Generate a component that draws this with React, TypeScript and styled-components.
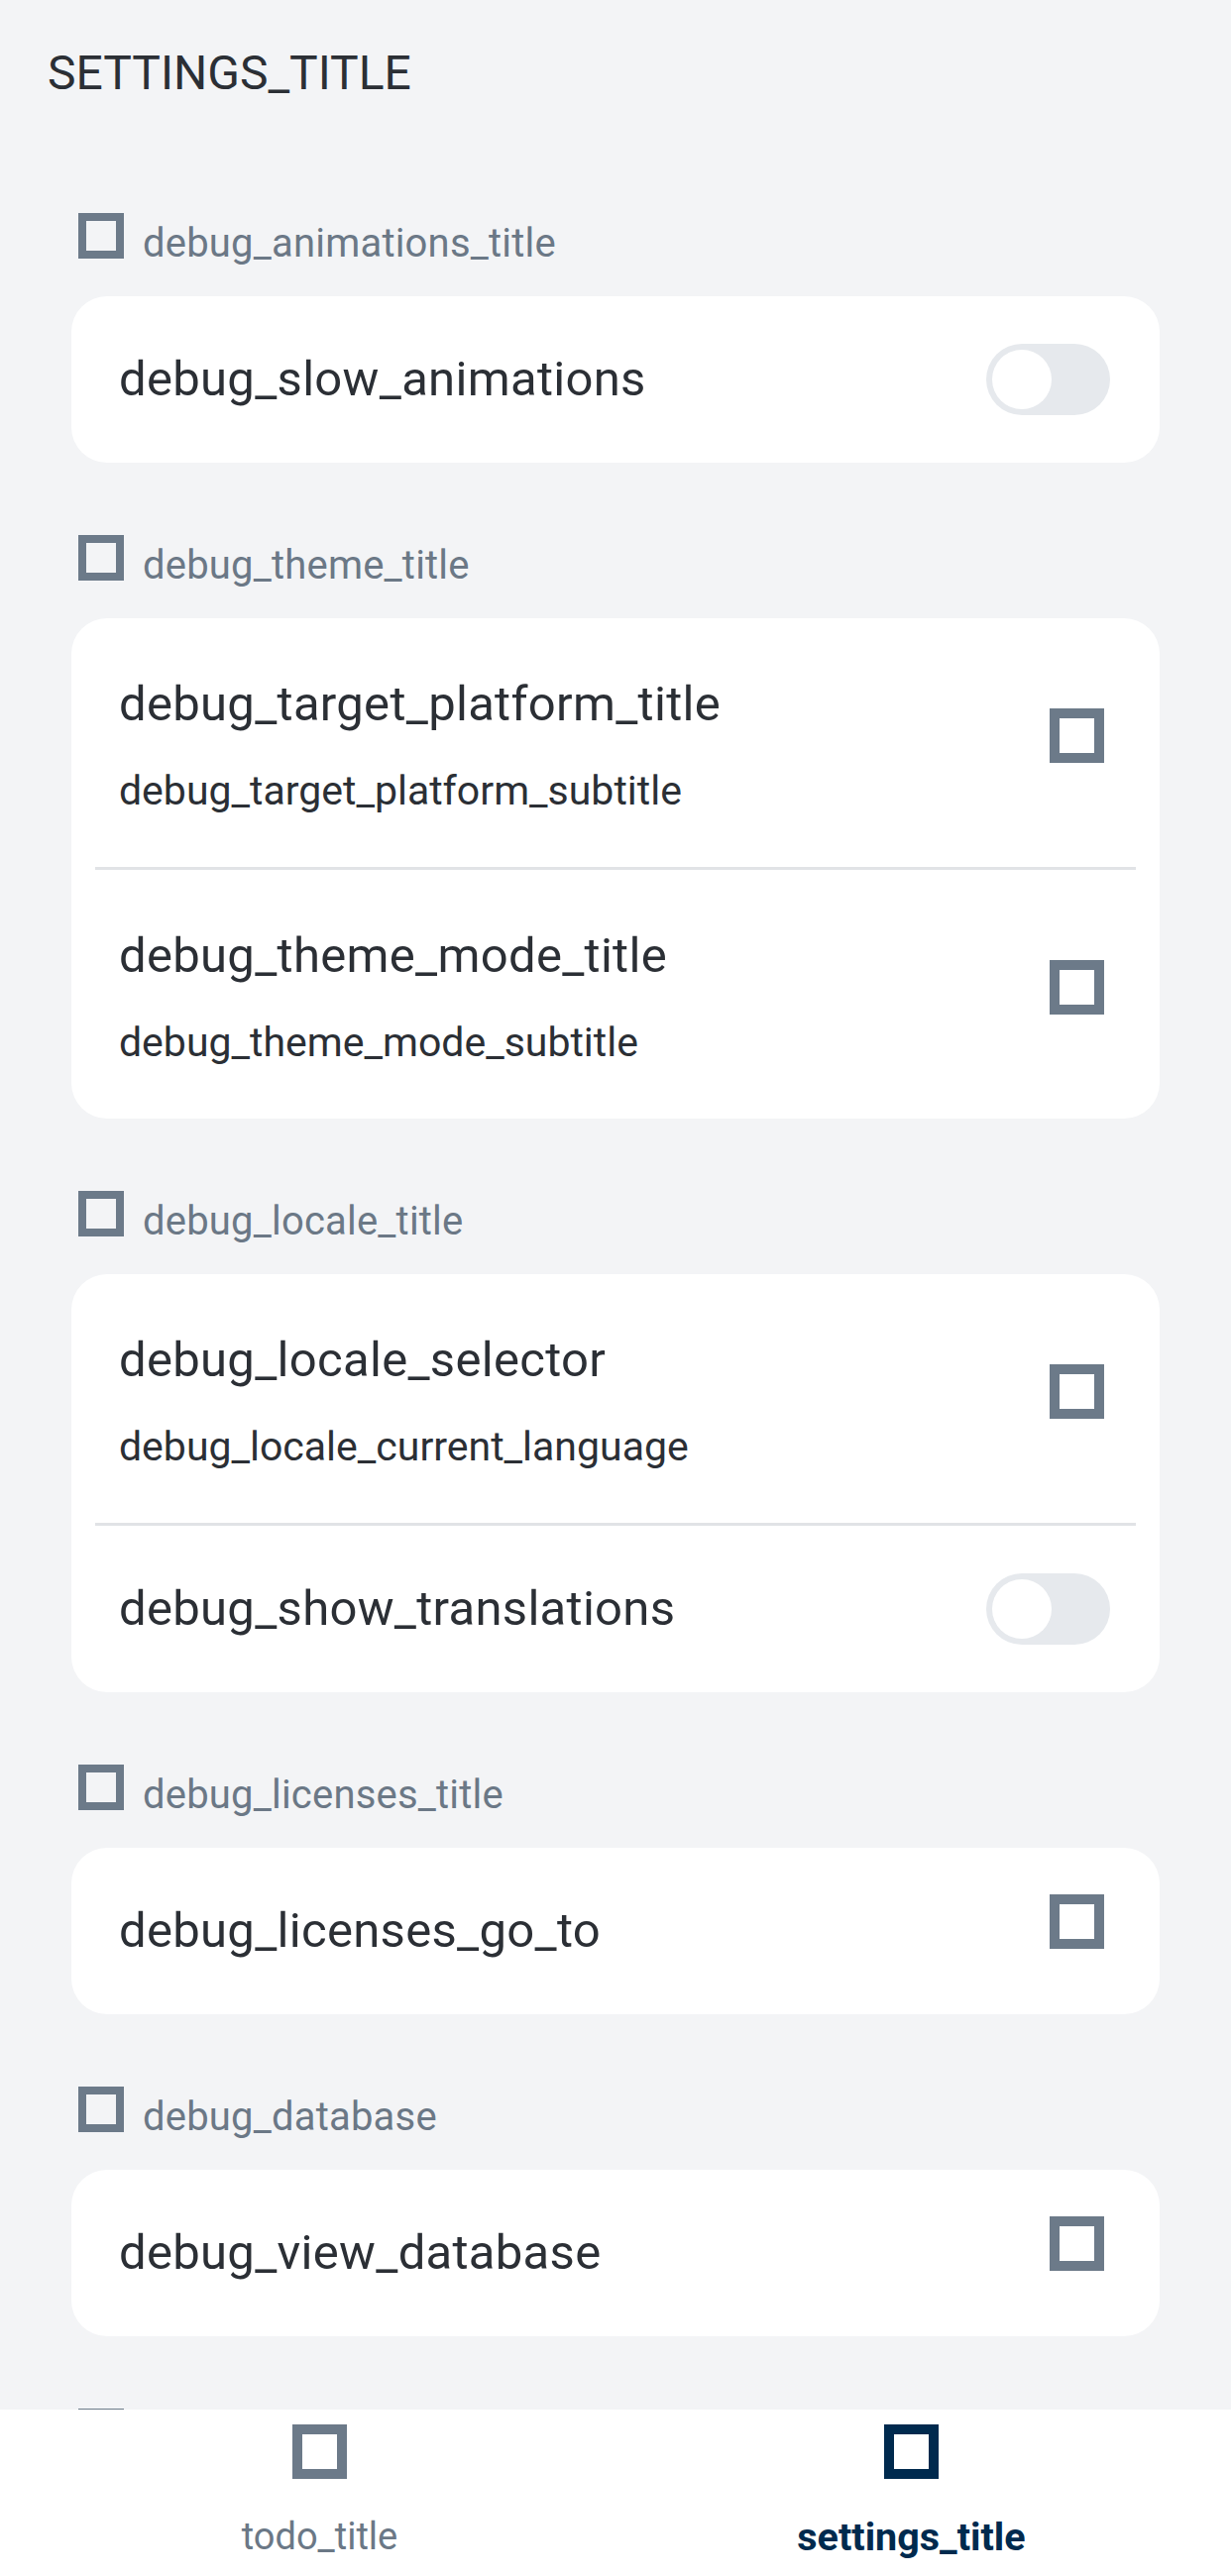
import React from 'react';
import styled, { createGlobalStyle } from 'styled-components';

const GlobalStyle = createGlobalStyle`
  html, body {
    margin: 0;
    padding: 0;
    background: #F3F4F6;
  }
  body {
    font-family: Roboto, "Liberation Sans", Arial, sans-serif;
  }
  * { box-sizing: border-box; }
`;

const Screen = styled.div`
  width: 1242px;
  height: 2600px;
  display: flex;
  flex-direction: column;
  overflow: hidden;
  background: #F3F4F6;
`;

const Content = styled.main`
  flex: 1;
  min-height: 0;
  overflow: hidden;
  padding-top: 46px;
  display: flex;
  flex-direction: column;
`;

const PageTitle = styled.h1`
  margin: 0 0 113px 0;
  padding: 0 48px;
  font-size: 48px;
  line-height: 56px;
  font-weight: 400;
  color: #2B2F35;
`;

const SectionList = styled.div`
  display: flex;
  flex-direction: column;
  gap: 73px;
  padding: 0 72px;
`;

const Section = styled.section`
  display: flex;
  flex-direction: column;
  gap: 24px;
`;

const SectionHeader = styled.div`
  display: flex;
  align-items: center;
  height: 60px;
  padding-left: 7px;
  gap: 19px;
`;

const HeaderLabel = styled.span`
  font-size: 40px;
  line-height: 47px;
  letter-spacing: 0.2px;
  color: #6B7886;
`;

const Card = styled.div`
  background: #FFFFFF;
  border-radius: 36px;
  overflow: hidden;
  display: flex;
  flex-direction: column;
`;

const Row = styled.div<{ $twoLine?: boolean }>`
  display: flex;
  align-items: center;
  justify-content: space-between;
  padding: ${(p) => (p.$twoLine ? '58px 48px 53px 48px' : '0 48px')};
  min-height: ${(p) => (p.$twoLine ? '251px' : '168px')};
`;

const TextBlock = styled.div`
  display: flex;
  flex-direction: column;
`;

const RowTitle = styled.span`
  font-size: 49px;
  line-height: 56px;
  letter-spacing: 0.3px;
  color: #2B2F35;
`;

const RowSubtitle = styled.span`
  margin-top: 36px;
  font-size: 41px;
  line-height: 47px;
  color: #2B2F35;
`;

const Divider = styled.div`
  height: 3px;
  margin: 0 24px;
  background: #E1E3E6;
`;

const Track = styled.div`
  width: 125px;
  height: 72px;
  border-radius: 36px;
  background: #E6E9ED;
  padding: 6px;
  margin-right: 2px;
  display: flex;
  align-items: center;
`;

const Thumb = styled.div`
  width: 60px;
  height: 60px;
  border-radius: 50%;
  background: #FFFFFF;
`;

const Glyph = styled.svg<{ $shift: number }>`
  display: block;
  flex-shrink: 0;
  margin-bottom: ${(p) => p.$shift}px;
`;

const TrailingGlyph = styled(Glyph)`
  margin-right: 8px;
`;

const NavBar = styled.nav`
  height: 168px;
  flex-shrink: 0;
  background: #FFFFFF;
  display: grid;
  grid-template-columns: 1fr 1fr;
  padding: 0 24px;
`;

const NavItem = styled.div`
  display: flex;
  flex-direction: column;
  align-items: center;
  padding-top: 15px;
  gap: 36px;
`;

const NavLabel = styled.span<{ $active?: boolean }>`
  font-size: ${(p) => (p.$active ? '39.5px' : '38px')};
  line-height: 45px;
  font-weight: ${(p) => (p.$active ? 700 : 400)};
  color: ${(p) => (p.$active ? '#002A4E' : '#6B7886')};
`;

const SLATE = '#6C7A89';

function SquareIcon({ size, stroke, color, shift = 0, trailing = false }: { size: number; stroke: number; color: string; shift?: number; trailing?: boolean }) {
  const C = trailing ? TrailingGlyph : Glyph;
  return (
    <C $shift={shift} width={size} height={size} viewBox={`0 0 ${size} ${size}`}>
      <rect x={stroke / 2} y={stroke / 2} width={size - stroke} height={size - stroke} fill="none" stroke={color} strokeWidth={stroke} />
    </C>
  );
}

function Toggle() {
  return (
    <Track>
      <Thumb />
    </Track>
  );
}

type Item =
  | { kind: 'toggle'; title: string }
  | { kind: 'link'; title: string; subtitle?: string };

type SectionData = { title: string; items: Item[] };

const sections: SectionData[] = [
  { title: 'debug_animations_title', items: [{ kind: 'toggle', title: 'debug_slow_animations' }] },
  {
    title: 'debug_theme_title',
    items: [
      { kind: 'link', title: 'debug_target_platform_title', subtitle: 'debug_target_platform_subtitle' },
      { kind: 'link', title: 'debug_theme_mode_title', subtitle: 'debug_theme_mode_subtitle' },
    ],
  },
  {
    title: 'debug_locale_title',
    items: [
      { kind: 'link', title: 'debug_locale_selector', subtitle: 'debug_locale_current_language' },
      { kind: 'toggle', title: 'debug_show_translations' },
    ],
  },
  { title: 'debug_licenses_title', items: [{ kind: 'link', title: 'debug_licenses_go_to' }] },
  { title: 'debug_database', items: [{ kind: 'link', title: 'debug_view_database' }] },
];

function SettingsRow({ item }: { item: Item }) {
  const twoLine = item.kind === 'link' && !!item.subtitle;
  return (
    <Row $twoLine={twoLine}>
      <TextBlock>
        <RowTitle>{item.title}</RowTitle>
        {item.kind === 'link' && item.subtitle && <RowSubtitle>{item.subtitle}</RowSubtitle>}
      </TextBlock>
      {item.kind === 'toggle' ? <Toggle /> : <SquareIcon size={55} stroke={10} color={SLATE} shift={20} trailing />}
    </Row>
  );
}

export default function App() {
  return (
    <>
      <GlobalStyle />
      <Screen>
        <Content>
          <PageTitle>SETTINGS_TITLE</PageTitle>
          <SectionList>
            {sections.map((s) => (
              <Section key={s.title}>
                <SectionHeader>
                  <SquareIcon size={46} stroke={8} color={SLATE} shift={14} />
                  <HeaderLabel>{s.title}</HeaderLabel>
                </SectionHeader>
                <Card>
                  {s.items.map((it, i) => (
                    <React.Fragment key={it.title}>
                      {i > 0 && <Divider />}
                      <SettingsRow item={it} />
                    </React.Fragment>
                  ))}
                </Card>
              </Section>
            ))}
            <Section>
              <SectionHeader>
                <SquareIcon size={46} stroke={8} color={SLATE} shift={14} />
              </SectionHeader>
            </Section>
          </SectionList>
        </Content>
        <NavBar>
          <NavItem>
            <SquareIcon size={55} stroke={10} color={SLATE} />
            <NavLabel>todo_title</NavLabel>
          </NavItem>
          <NavItem>
            <SquareIcon size={55} stroke={10} color="#002A4E" />
            <NavLabel $active>settings_title</NavLabel>
          </NavItem>
        </NavBar>
      </Screen>
    </>
  );
}
